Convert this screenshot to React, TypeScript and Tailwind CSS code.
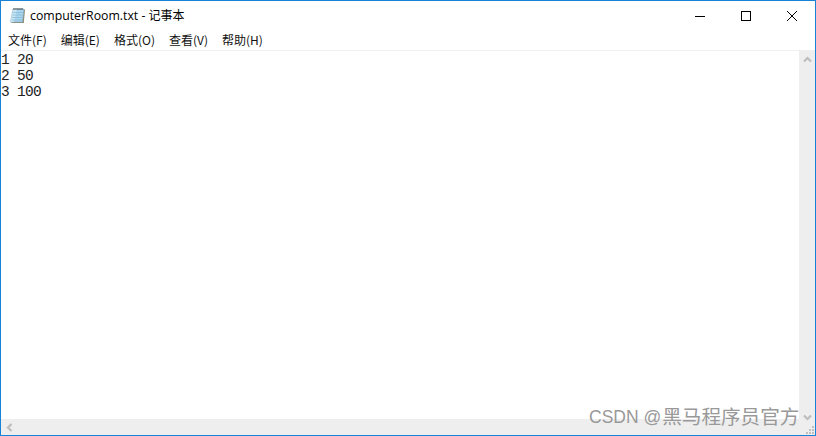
const cjk = { fontFamily: '"Noto Sans CJK SC", "Noto Sans", sans-serif' };

function NoteIcon() {
  return (
    <svg width="17" height="17" viewBox="0 0 17 17" className="shrink-0">
      <path d="M4.5 2.5H16l-1.2 13.5H2.5z" fill="#8f8a70" />
      <path d="M4 2H15l-1.5 13H1.5z" fill="#a9d6ee" stroke="#7ea8bf" strokeWidth="0.6" />
      <path d="M4 2H8L5 15H1.5z" fill="#c9e6f5" />
      <path d="M3.6 5.5h10.6M3.3 8h10.6M3 10.5h10.6M2.7 13h10.6" stroke="#86b6d0" strokeWidth="0.7" />
      <path d="M5 1v2M7 1v2M9 1v2M11 1v2M13 1v2" stroke="#333" strokeWidth="0.9" />
    </svg>
  );
}

function Chevron({ d }: { d: string }) {
  return (
    <svg width="9" height="9" viewBox="0 0 9 9">
      <path d={d} fill="none" stroke="#bdbdbd" strokeWidth="2.2" />
    </svg>
  );
}

export default function App() {
  const menus = ["文件(F)", "编辑(E)", "格式(O)", "查看(V)", "帮助(H)"];
  return (
    <div className="relative flex h-[436px] w-[816px] flex-col overflow-hidden border border-[#1783d8] bg-white">
      <div className="flex h-[29px] shrink-0 items-center">
        <div className="ml-[8px] flex items-center gap-[4px]">
          <NoteIcon />
          <span className="flex items-center gap-[3px] pt-[1px] text-[12.3px] leading-none text-black" style={{ fontFamily: '"Open Sans", "Noto Sans CJK SC", sans-serif' }}>
            <span>computerRoom.txt -</span>
            <span className="text-[12px]">记事本</span>
          </span>
        </div>
        <div className="ml-auto flex h-full items-center">
          <div className="flex h-full w-[46px] items-center justify-center">
            <svg width="10" height="10" viewBox="0 0 10 10">
              <path d="M0 5.5h10" stroke="#000" strokeWidth="1" />
            </svg>
          </div>
          <div className="flex h-full w-[46px] items-center justify-center">
            <svg width="10" height="10" viewBox="0 0 10 10">
              <rect x="0.5" y="0.5" width="9" height="9" fill="none" stroke="#000" strokeWidth="1" />
            </svg>
          </div>
          <div className="flex h-full w-[46px] items-center justify-center">
            <svg width="10" height="10" viewBox="0 0 10 10">
              <path d="M0 0l10 10M10 0L0 10" stroke="#000" strokeWidth="1" />
            </svg>
          </div>
        </div>
      </div>
      <div className="flex h-[21px] shrink-0 items-center gap-[14px] border-b border-[#f0f0f0] pb-[1px] pl-[7px] text-[12px] text-[#111]" style={cjk}>
        {menus.map((m) => (
          <span key={m}>{m}</span>
        ))}
      </div>
      <div className="flex min-h-0 flex-1">
        <div className="flex min-w-0 flex-1 flex-col">
          <div className="flex-1 whitespace-pre pt-[1px] text-[14.5px] leading-[16px] text-[#222]" style={{ fontFamily: '"Liberation Mono", monospace', letterSpacing: "-0.7px" }}>
            {"1 20\n2 50\n3 100"}
          </div>
          <div className="flex h-[16px] shrink-0 items-center bg-[#eeeeee] px-[4px]">
            <Chevron d="M6.5 1L3 4.5 6.5 8" />
          </div>
        </div>
        <div className="flex w-[16px] shrink-0 flex-col items-center justify-between bg-[#eeeeee] pt-[4px]">
          <Chevron d="M1 6.5L4.5 3 8 6.5" />
          <div className="mb-[13px] flex flex-col items-center gap-[1px]">
            <Chevron d="M1 2.5L4.5 6 8 2.5" />
          </div>
        </div>
      </div>
      <svg width="8" height="8" viewBox="0 0 8 8" className="absolute bottom-[1px] right-[1px]">
        <path d="M6 0h2v2H6zM3 3h2v2H3zM6 3h2v2H6zM0 6h2v2H0zM3 6h2v2H3zM6 6h2v2H6z" fill="#c0c0c0" />
      </svg>
      <div className="absolute bottom-[7px] left-[588px] flex items-center gap-[1px] whitespace-nowrap leading-[22px] text-[#999999]" style={{ fontFamily: '"Liberation Sans", "Noto Sans CJK SC", sans-serif' }}>
        <span className="text-[17.5px]">CSDN @</span>
        <span className="text-[19.6px]">黑马程序员官方</span>
      </div>
    </div>
  );
}
